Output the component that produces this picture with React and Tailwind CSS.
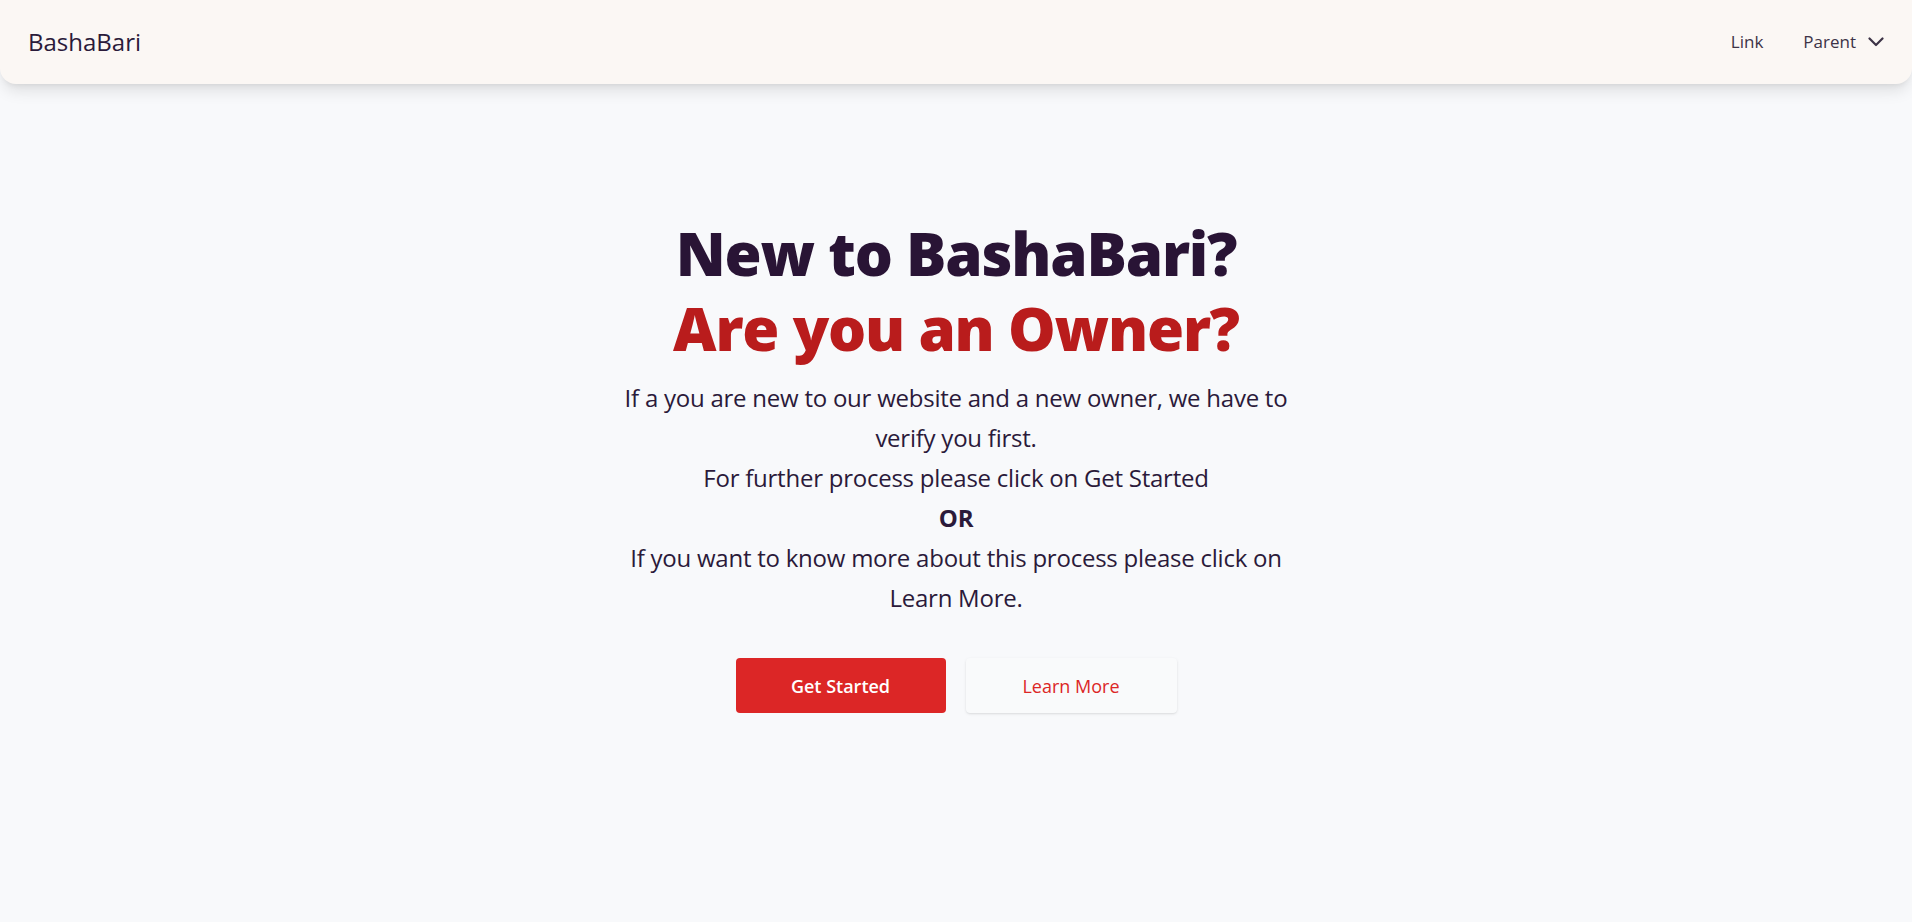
import React from 'react'

function ChevronDown() {
  return (
    <svg width="16" height="10" viewBox="0 0 16 10" fill="none">
      <path d="M1.5 1.5 L8 8 L14.5 1.5" stroke="currentColor" strokeWidth="2.2" strokeLinecap="round" strokeLinejoin="round" />
    </svg>
  )
}

export default function App() {
  return (
    <div className="min-h-[1600px] bg-[#f8f9fb] font-['Open_Sans','Noto_Sans',sans-serif] text-[#2a1a3a]">
      {/* top navbar */}
      <nav className="sticky top-0 z-10 flex h-[84px] items-center justify-between rounded-b-2xl bg-[#fbf7f4] px-7 shadow-lg">
        <a href="#" className="text-2xl text-[#2a1a3a]">BashaBari</a>
        <div className="flex items-center gap-10 text-[17px] text-[#3d3347]">
          <a href="#">Link</a>
          <button className="flex items-center gap-3">
            Parent
            <ChevronDown />
          </button>
        </div>
      </nav>

      {/* hero */}
      <section className="flex flex-col items-center pt-[132px] text-center">
        <h1 className="text-6xl font-extrabold leading-tight tracking-[-0.02em] text-[#291435]">
          New to BashaBari?
          <br />
          <span className="text-[#b91c1c]">Are you an Owner?</span>
        </h1>
        <div className="mt-3 max-w-2xl text-2xl leading-10 tracking-[-0.01em] text-[#2b1a3a]">
          <p>If a you are new to our website and a new owner, we have to verify you first.</p>
          <p>For further process please click on Get Started</p>
          <p className="font-bold">OR</p>
          <p>If you want to know more about this process please click on Learn More.</p>
        </div>
        <div className="mt-10 flex gap-5">
          <button className="h-[55px] w-[210px] rounded bg-[#dc2626] text-lg font-semibold text-white">
            Get Started
          </button>
          <button className="h-[55px] w-[211px] rounded bg-[#f9fafb] text-lg text-[#dc2626] shadow">
            Learn More
          </button>
        </div>
      </section>
    </div>
  )
}
